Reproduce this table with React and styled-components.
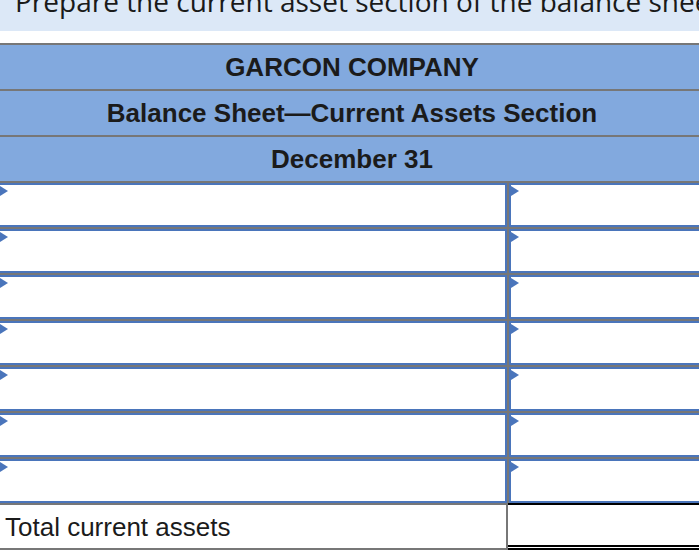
import React from "react";
import styled, { createGlobalStyle } from "styled-components";

const Global = createGlobalStyle`
  html, body { margin: 0; padding: 0; background: #fff; overflow: hidden; }
  body { width: 699px; height: 556px; font-family: "Liberation Sans", Arial, sans-serif; }
`;

const Page = styled.div`
  width: 699px;
  height: 556px;
  overflow: hidden;
`;

const Instruction = styled.div`
  height: 31px;
  background: #dce8f7;
  overflow: hidden;
  padding-left: 15px;
`;

const InstructionText = styled.div`
  margin-top: -13px;
  font-family: "Open Sans", "Noto Sans", sans-serif;
  font-size: 28px;
  line-height: 28px;
  color: #1a1a1a;
  white-space: nowrap;
`;

const Sheet = styled.div`
  margin-top: 12px;
  width: 730px;
`;

const HeaderRow = styled.div`
  height: 44px;
  border-top: 2px solid #777;
  background: #82a9de;
  display: flex;
  align-items: center;
  justify-content: center;
  padding-right: 26px;
  font-weight: bold;
  font-size: 26px;
  color: #1b1b1b;
`;

const BodyRow = styled.div`
  display: grid;
  grid-template-columns: 507px 1fr;
  column-gap: 2px;
  padding-top: 2px;
  background: #777;
`;

const InputCell = styled.div`
  position: relative;
  height: 40px;
  background: #fff;
  border: 2px solid #4a75bb;
  border-left-width: ${(p) => (p.$first ? "0" : "2px")};
`;

const Arrow = styled.span`
  position: absolute;
  top: 1px;
  left: 0;
  width: 0;
  height: 0;
  border-top: 5.5px solid transparent;
  border-bottom: 5.5px solid transparent;
  border-left: 8px solid #4a75bb;
`;

const TotalRow = styled.div`
  display: grid;
  grid-template-columns: 506px 1fr;
  column-gap: 2px;
  background: #777;
`;

const TotalLabel = styled.div`
  height: 43px;
  border-top: 2px solid #777;
  border-bottom: 2px solid #777;
  background: #fff;
  display: flex;
  align-items: center;
  padding-left: 5px;
  padding-top: 1px;
  box-sizing: border-box;
  height: 47px;
  font-size: 26px;
  color: #1b1b1b;
`;

const TotalValue = styled.div`
  height: 40px;
  background: #fff;
  border-top: 2px solid #000;
  border-bottom: 5px double #000;
`;

const rows = [0, 1, 2, 3, 4, 5, 6];

export default function App() {
  return (
    <Page>
      <Global />
      <Instruction>
        <InstructionText>
          Prepare the current asset section of the balance sheet for Garcon Company.
        </InstructionText>
      </Instruction>
      <Sheet>
        <HeaderRow>GARCON COMPANY</HeaderRow>
        <HeaderRow>Balance Sheet—Current Assets Section</HeaderRow>
        <HeaderRow>December 31</HeaderRow>
        {rows.map((r) => (
          <BodyRow key={r}>
            <InputCell $first>
              <Arrow />
            </InputCell>
            <InputCell>
              <Arrow />
            </InputCell>
          </BodyRow>
        ))}
        <TotalRow>
          <TotalLabel>Total current assets</TotalLabel>
          <TotalValue />
        </TotalRow>
      </Sheet>
    </Page>
  );
}
